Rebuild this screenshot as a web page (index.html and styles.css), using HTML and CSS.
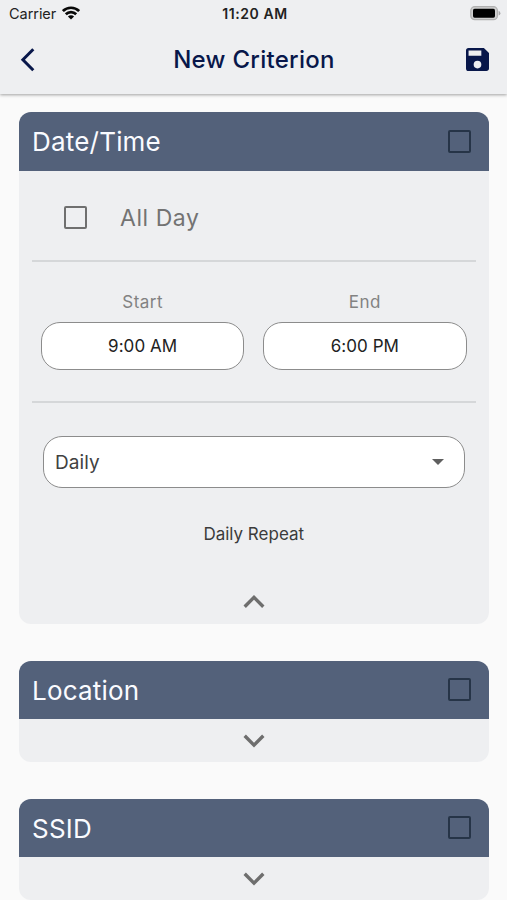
FILE: index.html
```
<!DOCTYPE html>
<html lang="en">
<head>
<meta charset="utf-8">
<title>New Criterion</title>
<link rel="stylesheet" href="styles.css">
</head>
<body>
<header class="top">
  <div class="status">
    <div class="carrier"><span>Carrier</span>
      <svg width="18" height="14" viewBox="0 0 18 14" fill="none" stroke="#080808" stroke-width="2.7"><path d="M.9 5.1a11.5 11.5 0 0 1 16.2 0M3.8 8.3a7.4 7.4 0 0 1 10.4 0"/><path d="M9 13.6 5.9 10.6a4.4 4.4 0 0 1 6.2 0z" fill="#080808" stroke="none"/></svg>
    </div>
    <div class="clock">11:20 AM</div>
    <svg class="battery" width="31" height="15" viewBox="0 0 31 15"><rect x=".8" y=".7" width="26.6" height="13" rx="4" fill="#cfcfcf" stroke="#b0b0b0" stroke-width="1.3"/><rect x="3" y="2.8" width="22" height="8.9" rx="1.6" fill="#000"/><path d="M28.6 4.8q1.8.7 1.8 2.4t-1.8 2.4z" fill="#a8a8a8"/></svg>
  </div>
  <div class="nav">
    <svg class="back" width="16" height="26" viewBox="0 0 16 26" fill="none" stroke="#08174a" stroke-width="3"><path d="M13.3 2.2 2.9 12.7l10.4 10.5"/></svg>
    <h1>New Criterion</h1>
    <svg class="save" width="23" height="23" viewBox="3 3 18 18" fill="#08174a"><path d="M17 3H5a2 2 0 0 0-2 2v14a2 2 0 0 0 2 2h14c1.1 0 2-.9 2-2V7l-4-4zm-5 16a3 3 0 1 1 0-6 3 3 0 0 1 0 6zm3-10H5V5h10v4z"/></svg>
  </div>
</header>
<main>
  <section class="card">
    <div class="head"><h2>Date/Time</h2><span class="box"></span></div>
    <div class="body">
      <div class="allday"><span class="box"></span><span class="label">All Day</span></div>
      <div class="times">
        <div class="field"><span>Start</span><div class="time">9:00 AM</div></div>
        <div class="field"><span>End</span><div class="time">6:00 PM</div></div>
      </div>
      <div class="select"><span>Daily</span><svg width="12" height="6" viewBox="0 0 12 6"><path d="M0 0h12L6 6z" fill="#5f5f5f"/></svg></div>
      <p class="repeat">Daily Repeat</p>
      <svg class="chev up" width="22" height="14" viewBox="0 0 22 14"><path d="m1.7 11.7 9.3-9.3 9.3 9.3"/></svg>
    </div>
  </section>
  <section class="card">
    <div class="head"><h2>Location</h2><span class="box"></span></div>
    <div class="fold"><svg class="chev" width="22" height="14" viewBox="0 0 22 14"><path d="m1.7 1.8 9.3 9.3 9.3-9.3"/></svg></div>
  </section>
  <section class="card">
    <div class="head"><h2>SSID</h2><span class="box"></span></div>
    <div class="fold"><svg class="chev" width="22" height="14" viewBox="0 0 22 14"><path d="m1.7 1.8 9.3 9.3 9.3-9.3"/></svg></div>
  </section>
</main>
</body>
</html>
```
FILE: styles.css
```
* { box-sizing: border-box; }
body { margin: 0; height: 900px; overflow: hidden; background: #fafafa; font-family: Inter, "Liberation Sans", sans-serif; color: #333; }
h1, h2, p { margin: 0; font-weight: 400; }
svg { display: block; flex: none; }
.top { height: 94px; background: #eeeff1; box-shadow: 0 1px 3px rgba(0,0,0,.36); }
.status { height: 27px; display: grid; grid-template-columns: 1fr auto 1fr; align-items: center; padding: 0 6px 0 9px; font-size: 14.5px; color: #222; }
.carrier { display: flex; align-items: center; gap: 6px; letter-spacing: -.05px; }
.carrier svg { margin-top: -2px; }
.clock { font-weight: 600; font-size: 14px; letter-spacing: .55px; }
.battery { justify-self: end; margin-top: -1px; }
.nav { height: 66px; display: grid; grid-template-columns: 40px 1fr 40px; align-items: center; padding: 0 18px 1px 20px; color: #08174a; }
.nav h1 { text-align: center; font-size: 24px; font-weight: 450; letter-spacing: .28px; padding-right: 1px; }
.save { justify-self: end; }
main { padding: 18px 18.5px 0 19px; }
.card { background: #eeeff1; border-radius: 12px; margin-bottom: 36.5px; }
.head { height: 58.5px; display: flex; justify-content: space-between; align-items: center; padding: 0 18px 0 13px; background: #53617a; border-radius: 12px 12px 0 0; color: #fafbff; }
.head h2 { font-size: 26px; line-height: 32px; letter-spacing: .2px; padding-top: 2px; }
.box { display: block; width: 23px; height: 23px; border: 2.5px solid #6f6f6f; border-radius: 2px; }
.head .box { border-color: #263447; }
.body { height: 453.5px; padding: 0 13px; }
.allday { height: 91.5px; display: flex; align-items: center; gap: 33px; padding: 4px 0 0 32px; border-bottom: 2px solid #d5d7d9; color: #737373; }
.allday .label { font-size: 23px; letter-spacing: .55px; padding-top: 1px; }
.times { height: 140.5px; display: flex; gap: 19px; padding: 29px 9px 0; border-bottom: 2px solid #d5d7d9; }
.field { flex: 1; text-align: center; font-size: 17px; line-height: 22px; color: #828282; letter-spacing: .45px; }
.time { height: 48px; margin-top: 9px; border: 1.5px solid #8c8c8c; border-radius: 19px; background: #fff; color: #222; font-size: 17px; line-height: 47px; letter-spacing: .05px; }
.select { height: 52px; margin: 33px 11px 0; padding: 0 20px 0 11px; display: flex; align-items: center; justify-content: space-between; border: 1.5px solid #8c8c8c; border-radius: 19px; background: #fff; font-size: 19px; letter-spacing: .1px; color: #414141; }
.select span { padding-top: 1px; }
.repeat { text-align: center; margin-top: 35px; font-size: 17px; line-height: 22px; color: #3b3b3b; }
.chev { fill: none; stroke: #6e6e6e; stroke-width: 3.4; }
.up { margin: 50px auto 0; }
.fold { height: 43px; display: flex; justify-content: center; align-items: center; }
```
